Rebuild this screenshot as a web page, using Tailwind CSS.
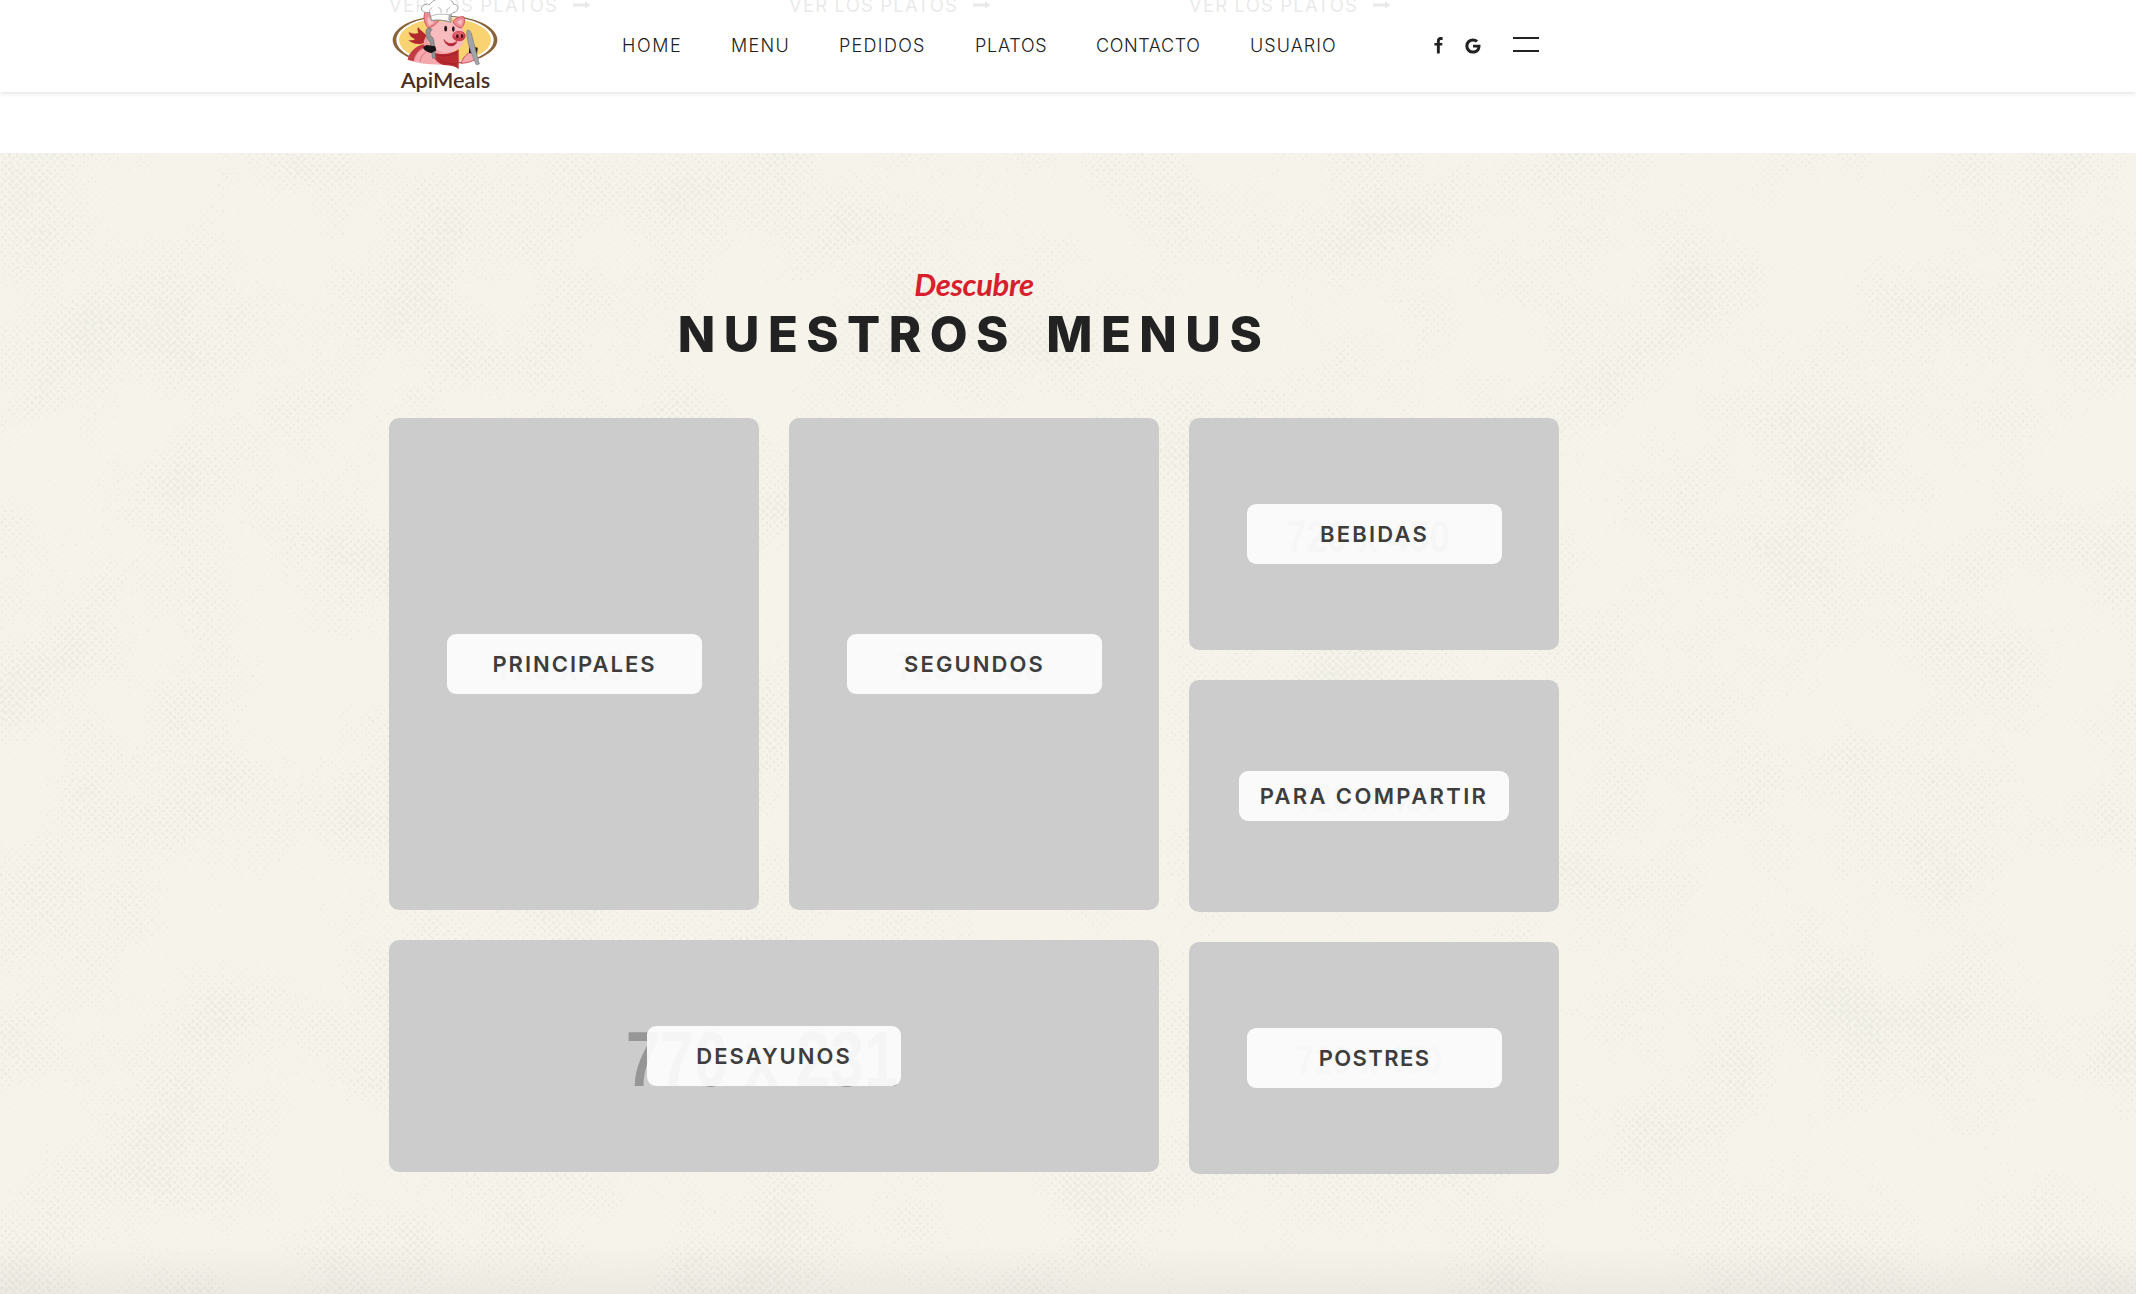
<!DOCTYPE html>
<html lang="es">
<head>
<meta charset="utf-8">
<title>ApiMeals</title>
<script src="https://cdn.jsdelivr.net/npm/@tailwindcss/browser@4"></script>
</head>
<body class="h-[1294px] overflow-hidden bg-white font-['Inter',sans-serif] text-[#222]">
<div class="relative flex h-[1294px] flex-col overflow-hidden">

  <!-- Links of the previous section, scrolled under the header -->
  <div class="grid h-[153px] shrink-0 grid-cols-[370px_370px_370px] content-start gap-x-[30px] pl-[389px] text-[18.5px] leading-[22px] text-[#222]">
    <a class="-mt-[6px] flex items-center gap-[15px]"><span class="tracking-[1.15px]">VER LOS PLATOS</span><svg class="h-[8px] w-[18px]" viewBox="0 0 18 8"><path d="M0 2.6h12V.3L17.6 4 12 7.7V5.4H0z" fill="currentColor"/></svg></a>
    <a class="-mt-[6px] flex items-center gap-[15px]"><span class="tracking-[1.15px]">VER LOS PLATOS</span><svg class="h-[8px] w-[18px]" viewBox="0 0 18 8"><path d="M0 2.6h12V.3L17.6 4 12 7.7V5.4H0z" fill="currentColor"/></svg></a>
    <a class="-mt-[6px] flex items-center gap-[15px]"><span class="tracking-[1.15px]">VER LOS PLATOS</span><svg class="h-[8px] w-[18px]" viewBox="0 0 18 8"><path d="M0 2.6h12V.3L17.6 4 12 7.7V5.4H0z" fill="currentColor"/></svg></a>
  </div>

  <!-- Sticky header -->
  <header class="absolute inset-x-0 top-0 z-10 flex h-[92px] items-start bg-white/90 pl-[385px] shadow-[0_0_6px_rgba(0,0,0,0.18)]">
    <svg class="h-[96px] w-[120px] shrink-0" viewBox="0 0 360 288">
      <ellipse cx="180" cy="120" rx="157" ry="73" fill="#8a6238"/>
      <ellipse cx="180" cy="120" rx="146" ry="70" fill="#fff"/>
      <ellipse cx="180" cy="120" rx="138" ry="66" fill="#f9d271"/>
      <!-- body and arms -->
      <path d="M68 179c5-22 25-42 48-46l80 8 30 45c-50 12-110 10-158-7z" fill="#f4a9ae"/>
      <path d="M68 179c5-22 25-42 48-46l8 9c-22 7-35 24-38 42z" fill="#c23a42"/>
      <path d="M88 178c4-18 16-32 34-36M105 184c2-12 8-22 18-28" fill="none" stroke="#e06f78" stroke-width="3"/>
      <path d="M228 190c6-18 18-30 34-36l13 12c-1 14-17 22-47 24z" fill="#f4a9ae" stroke="#d14a55" stroke-width="3"/>
      <!-- scarf tail -->
      <path d="M118 128c-14 8-36 4-48-8 10 2 17 0 20-3-10-3-17-10-19-21 12 7 22 6 29 2-3-6-3-12-1-17 8 12 22 18 29 31z" fill="#b3282d"/>
      <!-- head -->
      <path d="M138 72c28-12 66-10 92 6 8 18 14 36 4 52-10 22-38 30-62 25-28-6-48-28-48-48 0-14 6-26 14-35z" fill="#f8bcbf"/>
      <path d="M124 106c0 26 22 46 50 51-28 3-55-10-58-33z" fill="#ee9ba2"/>
      <path d="M121 34c18 1 34 12 40 29-8 10-20 18-31 21-12-12-17-32-9-50z" fill="#ec8d95" stroke="#cf5661" stroke-width="3"/>
      <path d="M129 50c9 4 15 10 18 18l-14 9c-6-8-8-18-4-27z" fill="#f8bcbf"/>
      <path d="M236 50c-12-1-26 5-32 14 4 11 14 19 25 20 9-9 13-22 7-34z" fill="#ec8d95" stroke="#cf5661" stroke-width="3"/>
      <path d="M230 59c-7 1-12 4-15 8l12 9c4-5 6-11 3-17z" fill="#f8bcbf"/>
      <ellipse cx="182" cy="86" rx="4.500" ry="8.500" fill="#24191b"/>
      <ellipse cx="205" cy="87" rx="4" ry="8" fill="#24191b"/>
      <ellipse cx="222" cy="108" rx="20" ry="16" fill="#c93d4b"/>
      <ellipse cx="220" cy="103" rx="16" ry="9" fill="#e0606c"/>
      <ellipse cx="217" cy="109" rx="4" ry="6" fill="#4b1119"/>
      <ellipse cx="231" cy="108" rx="3.500" ry="6" fill="#4b1119"/>
      <path d="M177 119c10 14 24 15 38 6-2 15-30 21-38-6z" fill="#a91f30" stroke="#c23a48" stroke-width="3"/>
      <!-- scarf -->
      <path d="M140 156c28 10 58 8 81-8v60c-12-10-24-12-40-12-20-2-34-18-41-40z" fill="#b92a30"/>
      <path d="M150 162c18 8 46 8 66-5M160 174c12 14 34 18 54 18" fill="none" stroke="#98202a" stroke-width="2.500"/>
      <!-- chef hat -->
      <path d="M139 61l-5-24c-15 3-27-4-24-14 3-9 15-13 24-9 8-13 25-20 40-19 19-2 30 9 32 18 9-1 15 7 12 15-3 9-12 9-19 13l-2 26c-18-7-38-8-58-6z" fill="#fff" stroke="#8d8d8d" stroke-width="2.500"/>
      <path d="M137 49c20-9 42-7 61-4l-1 21c-20-7-40-6-58-4zM134 37c-2-6 2-12 8-14M168 38c2-8-2-14-8-16M186 38c-2-9 4-14 9-15" fill="none" stroke="#8a8a8a" stroke-width="1.800"/>
      <path d="M198 43l1 21-9-3 1-16z" fill="#aaa"/>
      <!-- cutlery -->
      <path d="M124 88c6-5 14-5 17 1-6 5-8 12-4 18 8 6 10 12 10 20l5 46-9 2-8-49c-10-6-14-26-11-38z" fill="#919395" stroke="#6d6f72" stroke-width="2"/>
      <path d="M124 135l27 4 3 12-14 8c-12-1-22-8-26-16z" fill="#161414"/>
      <path d="M252 137l26 6-2 20-24-4z" fill="#161414"/>
      <path d="M249 90c6 1 10 7 12 18l22 84-9 2c-14-30-28-66-29-96 0-4 1-8 4-8z" fill="#a2a4a6" stroke="#777a7d" stroke-width="2"/>
      <text x="47" y="264" textLength="269" lengthAdjust="spacingAndGlyphs" font-family="Lato, sans-serif" font-weight="600" font-size="65" fill="#4d2d22">ApiMeals</text>
    </svg>

    <nav class="ml-[117px] flex h-[92px] items-center text-[18px] leading-none font-light">
      <a class="w-[109px] tracking-[1.6px]">HOME</a>
      <a class="w-[108px] tracking-[1.3px]">MENU</a>
      <a class="w-[136px] tracking-[1.3px]">PEDIDOS</a>
      <a class="w-[121px] tracking-[0.75px]">PLATOS</a>
      <a class="w-[154px] tracking-[0.6px]">CONTACTO</a>
      <a class="w-[85px] tracking-[1.05px]">USUARIO</a>
    </nav>

    <div class="flex h-[92px] items-start pt-[37px] pl-[99px]">
      <svg class="h-[17px] w-[9px]" viewBox="0 0 9 17"><path d="M8.600.2v2.700H7.100c-1.100 0-1.300.5-1.300 1.300v1.700h2.700l-.4 2.700H5.800v7.900H2.900V8.600H.4V5.900h2.500v-2C2.900 1.400 4.400.1 6.600.1c1 0 1.800 0 2 .1z" fill="#222"/></svg>
      <svg class="mt-[1px] ml-[22px] h-[16px] w-[16px]" viewBox="0 0 16 16"><path d="M8 6.700h7.400c.1.400.1.800.1 1.300 0 4.500-3 7.600-7.500 7.600A7.600 7.600 0 0 1 .3 8 7.600 7.600 0 0 1 8 .4c2 0 3.800.8 5.100 2l-2.200 2.100A4.200 4.200 0 0 0 8 3.400 4.600 4.600 0 0 0 3.400 8 4.600 4.600 0 0 0 8 12.600c3 0 4.100-2 4.300-3.200H8z" fill="#222"/></svg>
      <div class="ml-[32px] flex h-[15px] w-[26px] flex-col justify-between"><span class="h-[2px] bg-[#222]"></span><span class="h-[2px] bg-[#222]"></span></div>
    </div>
  </header>

  <!-- Menus section -->
  <section class="relative h-[1141px] shrink-0 overflow-hidden bg-[#f6f3eb]">
    <!-- Halftone paper texture -->
    <svg class="absolute inset-0 h-[1141px] w-[2136px]" width="2136" height="1141">
      <defs>
        <radialGradient id="dot"><stop offset="0" stop-color="#000" stop-opacity="1"/><stop offset="1" stop-color="#000" stop-opacity="0"/></radialGradient>
        <pattern id="dots" width="7.500" height="7.500" patternUnits="userSpaceOnUse">
          <circle cx="1.900" cy="1.900" r="3.400" fill="url(#dot)"/>
          <circle cx="5.600" cy="5.600" r="3.400" fill="url(#dot)"/>
        </pattern>
        <filter id="halftone" x="0" y="0" width="100%" height="100%" color-interpolation-filters="sRGB">
          <feTurbulence type="fractalNoise" baseFrequency="0.0085" numOctaves="4" seed="11" result="n"/>
          <feColorMatrix in="n" type="matrix" values="0 0 0 0 0  0 0 0 0 0  0 0 0 0 0  1.200 0 0 0 -0.110" result="patch"/>
          <feTurbulence type="fractalNoise" baseFrequency="0.35" numOctaves="2" seed="4" result="g"/>
          <feColorMatrix in="g" type="matrix" values="0 0 0 0 0  0 0 0 0 0  0 0 0 0 0  1 0 0 0 0" result="grain"/>
          <feComposite in="SourceGraphic" in2="patch" operator="arithmetic" k2="0.5" k3="0.5" result="a"/>
          <feComposite in="a" in2="grain" operator="arithmetic" k2="0.75" k3="0.4" result="b"/>
          <feColorMatrix in="b" type="matrix" values="0 0 0 0 0.920  0 0 0 0 0.920  0 0 0 0 0.888  0 0 0 8 -4.800"/>
        </filter>
      </defs>
      <rect width="2136" height="1141" fill="url(#dots)" filter="url(#halftone)" opacity="0.8"/>
    </svg>
    <div class="absolute inset-x-0 bottom-0 h-[50px] bg-linear-to-b from-black/0 to-black/4"></div>

    <div class="relative ml-[389px] w-[1170px] pt-[111px]">
      <p class="text-center font-['Lato',sans-serif] text-[31px] font-bold leading-[40px] tracking-[-0.4px] text-[#d8202c] italic">Descubre</p>
      <h2 class="mt-[3px] text-center text-[49px] leading-[56px] font-extrabold tracking-[8.5px] text-[#222] [word-spacing:10px]">NUESTROS MENUS</h2>

      <div class="mt-[55px] flex gap-[30px] text-[22px] font-semibold text-[#3d3d3d]">
        <div class="grid w-[770px] grid-cols-2 gap-[30px] self-start">
          <a class="relative grid h-[492px] place-items-center overflow-hidden rounded-[10px] bg-[#ccc]">
            <svg class="absolute top-[226px] left-[107px] h-[44px] w-[150px]" viewBox="0 0 150 44"><text x="0" y="36" textLength="146" lengthAdjust="spacingAndGlyphs" font-family="Liberation Sans, sans-serif" font-size="40" fill="#b0b0b0">720 x 950</text></svg>
            <span class="relative left-[0.5px] flex h-[60px] w-[255px] items-center justify-center rounded-[9px] bg-white/90 tracking-[2px]">PRINCIPALES</span>
          </a>
          <a class="relative grid h-[492px] place-items-center overflow-hidden rounded-[10px] bg-[#ccc]">
            <svg class="absolute top-[226px] left-[107px] h-[44px] w-[150px]" viewBox="0 0 150 44"><text x="0" y="36" textLength="146" lengthAdjust="spacingAndGlyphs" font-family="Liberation Sans, sans-serif" font-size="40" fill="#b0b0b0">720 x 950</text></svg>
            <span class="relative left-[0.5px] flex h-[60px] w-[255px] items-center justify-center rounded-[9px] bg-white/90 tracking-[2.1px]">SEGUNDOS</span>
          </a>
          <a class="relative col-span-2 grid h-[232px] place-items-center overflow-hidden rounded-[10px] bg-[#ccc]">
            <svg class="absolute top-[80px] left-[237px] h-[80px] w-[280px]" viewBox="0 0 280 80"><text x="0" y="66" textLength="272" lengthAdjust="spacingAndGlyphs" font-family="Liberation Sans, sans-serif" font-size="77" fill="#969696">770 x 231</text></svg>
            <span class="relative flex h-[60px] w-[254px] items-center justify-center rounded-[9px] bg-white/90 tracking-[2px]">DESAYUNOS</span>
          </a>
        </div>
        <div class="grid w-[370px] gap-[30px]">
          <a class="relative grid h-[232px] place-items-center overflow-hidden rounded-[10px] bg-[#ccc]">
            <svg class="absolute top-[92px] left-[97px] h-[50px] w-[170px]" viewBox="0 0 170 50"><text x="0" y="42" textLength="164" lengthAdjust="spacingAndGlyphs" font-family="Liberation Sans, sans-serif" font-size="45" fill="#a6a6a6">720 x 450</text></svg>
            <span class="relative left-[0.5px] flex h-[60px] w-[255px] items-center justify-center rounded-[9px] bg-white/90 tracking-[2.2px]">BEBIDAS</span>
          </a>
          <a class="relative grid h-[232px] place-items-center overflow-hidden rounded-[10px] bg-[#ccc]">
            <svg class="absolute top-[96px] left-[107px] h-[44px] w-[150px]" viewBox="0 0 150 44"><text x="0" y="36" textLength="146" lengthAdjust="spacingAndGlyphs" font-family="Liberation Sans, sans-serif" font-size="40" fill="#b0b0b0">720 x 450</text></svg>
            <span class="relative flex h-[50px] w-[270px] items-center justify-center rounded-[9px] bg-white/90 tracking-[2.37px]">PARA COMPARTIR</span>
          </a>
          <a class="relative grid h-[232px] place-items-center overflow-hidden rounded-[10px] bg-[#ccc]">
            <svg class="absolute top-[96px] left-[107px] h-[44px] w-[150px]" viewBox="0 0 150 44"><text x="0" y="36" textLength="146" lengthAdjust="spacingAndGlyphs" font-family="Liberation Sans, sans-serif" font-size="40" fill="#b0b0b0">720 x 450</text></svg>
            <span class="relative left-[0.5px] flex h-[60px] w-[255px] items-center justify-center rounded-[9px] bg-white/90 tracking-[1.4px]">POSTRES</span>
          </a>
        </div>
      </div>
    </div>
  </section>
</div>
</body>
</html>
